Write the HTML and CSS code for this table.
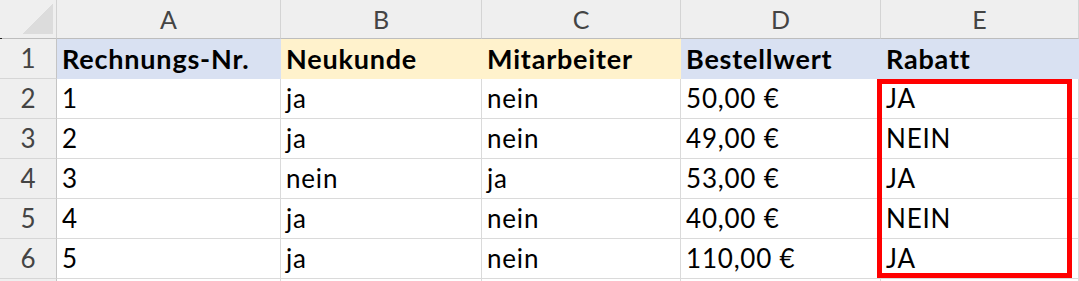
FILE: index.html
```html
<!DOCTYPE html>
<html lang="de">
<head>
<meta charset="utf-8">
<title>Tabelle</title>
<link rel="stylesheet" href="styles.css">
</head>
<body>
<div class="sheet">
  <div class="grid">
    <div class="corner"><span class="tri"></span></div>
    <div class="colhead">A</div>
    <div class="colhead">B</div>
    <div class="colhead">C</div>
    <div class="colhead">D</div>
    <div class="colhead">E</div>

    <div class="rowhead">1</div>
    <div class="cell th blue">Rechnungs-Nr.</div>
    <div class="cell th yellow">Neukunde</div>
    <div class="cell th yellow">Mitarbeiter</div>
    <div class="cell th blue">Bestellwert</div>
    <div class="cell th blue">Rabatt</div>

    <div class="rowhead">2</div>
    <div class="cell">1</div>
    <div class="cell">ja</div>
    <div class="cell">nein</div>
    <div class="cell">50,00 €</div>
    <div class="cell">JA</div>

    <div class="rowhead">3</div>
    <div class="cell">2</div>
    <div class="cell">ja</div>
    <div class="cell">nein</div>
    <div class="cell">49,00 €</div>
    <div class="cell">NEIN</div>

    <div class="rowhead">4</div>
    <div class="cell">3</div>
    <div class="cell">nein</div>
    <div class="cell">ja</div>
    <div class="cell">53,00 €</div>
    <div class="cell">JA</div>

    <div class="rowhead">5</div>
    <div class="cell">4</div>
    <div class="cell">ja</div>
    <div class="cell">nein</div>
    <div class="cell">40,00 €</div>
    <div class="cell">NEIN</div>

    <div class="rowhead">6</div>
    <div class="cell">5</div>
    <div class="cell">ja</div>
    <div class="cell">nein</div>
    <div class="cell">110,00 €</div>
    <div class="cell">JA</div>

    <div class="rowhead"></div>
    <div class="cell"></div>
    <div class="cell"></div>
    <div class="cell"></div>
    <div class="cell"></div>
    <div class="cell"></div>
  </div>
  <div class="highlight"></div>
</div>
</body>
</html>
```

FILE: styles.css
```css
* { box-sizing: border-box; }

html, body {
  margin: 0;
  padding: 0;
  background: #ffffff;
  overflow: hidden;
}

.sheet {
  position: relative;
  width: 1079px;
  height: 281px;
  overflow: hidden;
  font-family: "Lato", "Liberation Sans", sans-serif;
}

.grid {
  display: grid;
  grid-template-columns: 57px 224px 201px 199px 200px 198px;
  grid-template-rows: 39px repeat(7, 40px);
}

.corner {
  position: relative;
  background: #efefef;
  border-right: 1px solid #d2d2d2;
  border-bottom: 1px solid #bdbdbd;
}

.corner::after {
  content: "";
  position: absolute;
  left: 0;
  bottom: -1px;
  width: 2px;
  height: 1px;
  background: #222;
}

.tri {
  position: absolute;
  right: 3px;
  bottom: 4px;
  width: 31px;
  height: 31px;
  background: linear-gradient(to bottom right, transparent 50%, #dcdcdc 50%);
}

.colhead {
  background: #efefef;
  border-right: 1px solid #d4d4d4;
  border-bottom: 1px solid #bdbdbd;
  color: #444444;
  font-size: 25px;
  line-height: 38px;
  text-align: center;
}

.rowhead {
  background: #efefef;
  border-right: 1px solid #c4c4c4;
  border-bottom: 1px solid #d6d6d6;
  color: #444444;
  font-size: 26px;
  line-height: 39px;
  text-align: center;
}

.cell {
  border-right: 1px solid #dadada;
  border-bottom: 1px solid #dadada;
  color: #000000;
  font-size: 26px;
  line-height: 39px;
  padding-left: 5px;
  white-space: nowrap;
  letter-spacing: 0.8px;
}

.th {
  font-weight: 700;
  font-size: 27px;
  letter-spacing: 0.8px;
}

.blue {
  background: #d9e1f2;
  border-color: #d9e1f2;
}

.yellow {
  background: #fff2cc;
  border-color: #fff2cc;
}

.highlight {
  position: absolute;
  left: 877px;
  top: 79px;
  width: 195px;
  height: 199px;
  border: 5px solid #ff0000;
  pointer-events: none;
}
```
